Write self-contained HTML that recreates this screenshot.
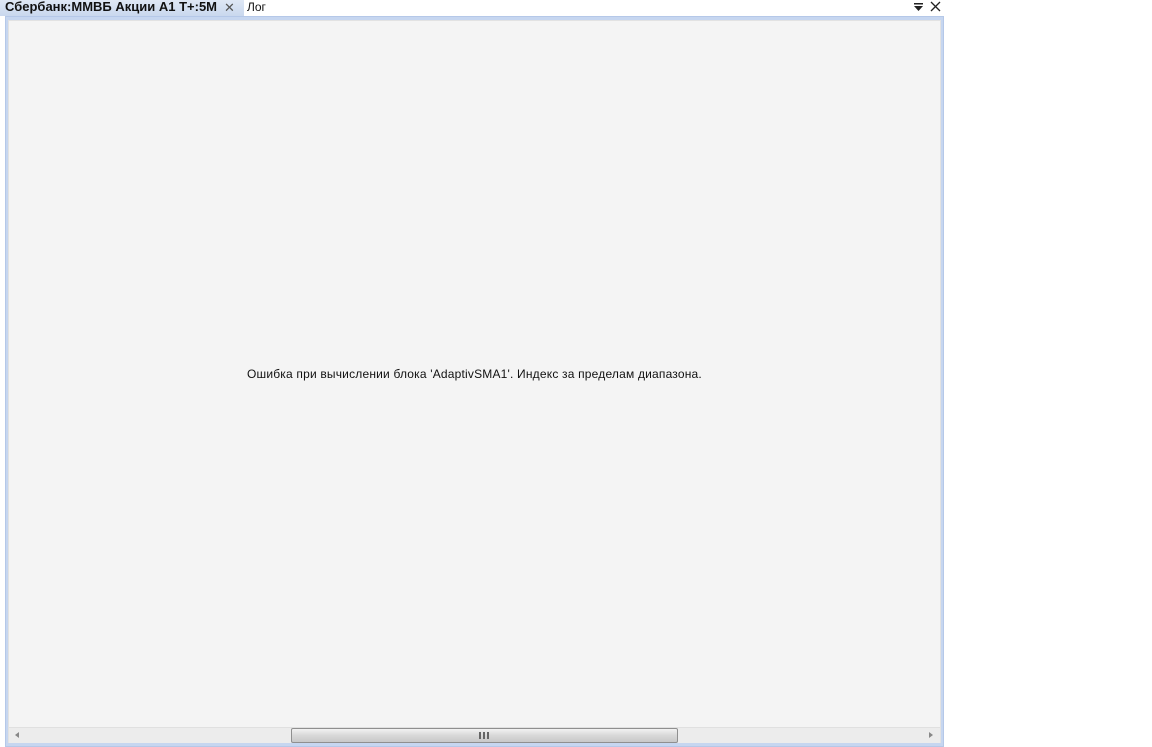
<!DOCTYPE html>
<html><head><meta charset="utf-8"><style>
*{margin:0;padding:0;box-sizing:border-box}
body{width:1152px;height:747px;background:#fff;position:relative;overflow:hidden;font-family:"Liberation Sans","DejaVu Sans",sans-serif}
.tab{position:absolute;left:0;top:0;width:244px;height:16px;background:linear-gradient(#dfe8f5,#c9d8ee);font-weight:bold;font-size:13px;color:#111;padding-left:5px;line-height:14px;white-space:nowrap}
.tabx{position:absolute;left:224px;top:1px;font-size:13px;font-weight:normal;color:#555;line-height:14px}
.log{position:absolute;left:247px;top:0;font-size:12px;line-height:14px;color:#111}
.frame{position:absolute;left:5px;top:16px;width:939px;height:731px;background:#c6d6f0;border:1px solid #b5c8e8}
.inner{position:absolute;left:8px;top:20px;width:933px;height:723px;background:#f4f4f4;border:1px solid #e2e2e2}
.msg{position:absolute;left:247px;top:367px;font-size:12px;color:#111;white-space:nowrap;letter-spacing:0.19px}
.sb{position:absolute;left:9px;top:727px;width:931px;height:16px;background:#ececec;border-top:1px solid #e0e0e0}
.thumb{position:absolute;left:291px;top:728px;width:387px;height:15px;border:1px solid #8f8f8f;border-radius:2px;background:linear-gradient(#f2f2f2,#d8d8d8 50%,#c8c8c8)}
.grip{position:absolute;left:479px;top:732px;width:10px;height:7px;background:repeating-linear-gradient(90deg,#666 0 2px,transparent 2px 4px)}
</style></head><body>
<div class="tab">Сбербанк:ММВБ Акции А1 Т+:5М<span class="tabx">✕</span></div>
<div class="log">Лог</div>
<svg style="position:absolute;left:913px;top:2px" width="12" height="11"><rect x="1" y="1" width="9" height="1.5" fill="#222"/><path d="M1 4h9l-4.5 5z" fill="#222"/></svg>
<svg style="position:absolute;left:930px;top:1px" width="11" height="11"><path d="M1 1L10 10M10 1L1 10" stroke="#222" stroke-width="1.3"/></svg>
<div class="frame"></div>
<div class="inner"></div>
<div class="msg">Ошибка при вычислении блока 'AdaptivSMA1'. Индекс за пределам диапазона.</div>
<div class="sb"></div>
<svg style="position:absolute;left:14px;top:731px" width="6" height="8"><path d="M5 1L1 4L5 7z" fill="#888"/></svg>
<svg style="position:absolute;left:928px;top:731px" width="6" height="8"><path d="M1 1L5 4L1 7z" fill="#888"/></svg>
<div class="thumb"></div>
<div class="grip"></div>
</body></html>
